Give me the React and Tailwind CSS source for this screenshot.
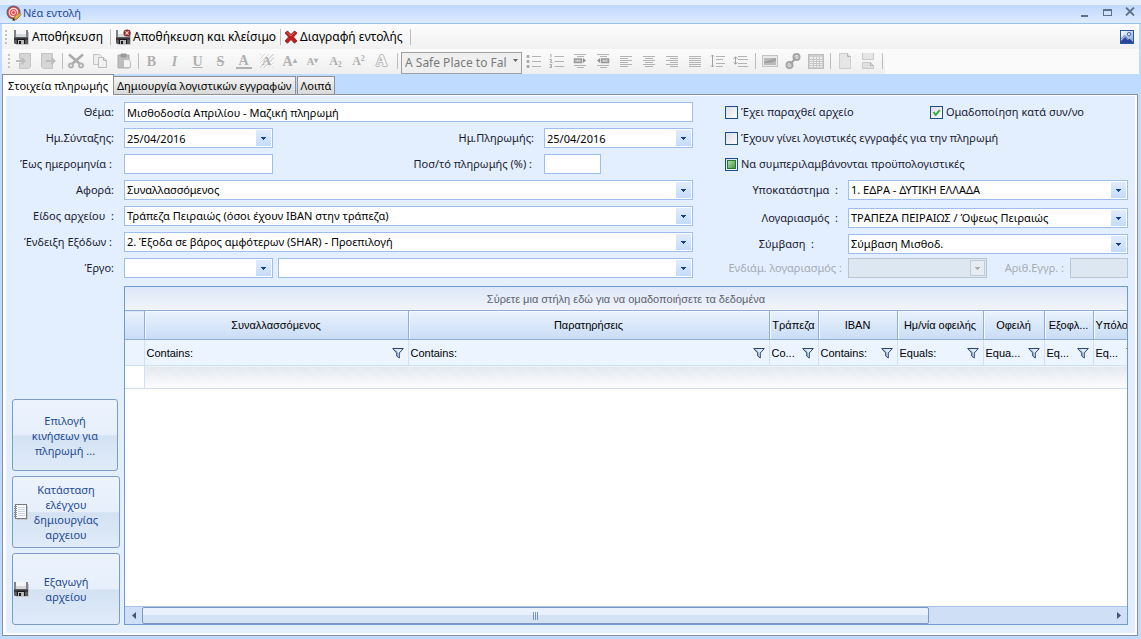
import React from 'react';
import clsx from 'clsx';

const FloppyIcon = ({ closing }) => (
  <svg width="15" height="16" viewBox="0 0 15 16" aria-hidden="true">
    <path d="M0 1h14v14H1l-1-1z" fill="#5b5b5e" />
    <path d="M0 1h2v7H0zM12 1h2v7h-2z" fill="#808285" />
    <path d="M2 1h10v7H2z" fill="#f4f6f6" />
    <path d="M2 5h10v3H2z" fill="#d3d9d9" />
    <path d="M0 9h14v2H0z" fill="#3a3a3d" />
    <path d="M3 10h8v5H3z" fill="#18181a" />
    <path d="M4 11h6v4H4z" fill="#b9bcbe" />
    <path d="M5 12h2v3H5z" fill="#18181a" />
    <path d="M14.500 3v12.500H2" fill="none" stroke="#c8c8c8" />
    {closing && (
      <>
        <circle cx="11" cy="4" r="3.6" fill="#8d2a2a" />
        <path d="M9.4 2.4l3.2 3.2M12.6 2.4L9.4 5.6" stroke="#f3c9c9" strokeWidth="1.3" />
      </>
    )}
  </svg>
);

const DeleteIcon = () => (
  <svg width="14" height="14" viewBox="0 0 14 14" aria-hidden="true">
    <path d="M1 3l2.500-2L7 4.500 10.500 1 13 3 9.500 7 13 11l-2.500 2.200L7 9.500 3.500 13.200 1 11l3.500-4z" fill="#c8191c" stroke="#6b2a2a" strokeWidth="0.8" />
    <path d="M3 2.500l4 3.500 3.500-3.500" fill="none" stroke="#e86a62" strokeWidth="0.9" />
  </svg>
);

const TargetIcon = () => (
  <svg width="16" height="16" viewBox="0 0 16 16" aria-hidden="true">
    <circle cx="7.500" cy="7.500" r="7" fill="#6d6265" />
    <circle cx="7.500" cy="7.500" r="5.800" fill="#e8474a" />
    <circle cx="7.500" cy="7.500" r="4.200" fill="none" stroke="#fbe9e6" strokeWidth="1.200" />
    <circle cx="7.500" cy="7.500" r="2" fill="none" stroke="#fbe9e6" strokeWidth="1" />
    <path d="M8 14l1-3 4.500-3 1.500 1.500L11 14l-3 1.500z" fill="#e2b33c" stroke="#7d5a24" strokeWidth="0.700" />
    <path d="M7 13l2 2-2.500.8z" fill="#222" />
  </svg>
);

const PictureIcon = () => (
  <svg width="14" height="14" viewBox="0 0 14 14" aria-hidden="true">
    <defs>
      <linearGradient id="sky" x1="0" y1="0" x2="1" y2="1">
        <stop offset="0" stopColor="#ffffff" />
        <stop offset="1" stopColor="#7e9fd6" />
      </linearGradient>
    </defs>
    <rect x="0.500" y="0.500" width="13" height="13" fill="url(#sky)" stroke="#2b58a5" />
    <path d="M1 11l4-4 3 3 1.500-1.500L13 12v1H1z" fill="#27479a" />
    <path d="M1 9l4-3.500L9 10" fill="none" stroke="#5877b8" />
    <circle cx="9" cy="4.200" r="1.700" fill="#dfe9fa" stroke="#3d62ab" />
  </svg>
);

const NotebookIcon = () => (
  <svg width="14" height="16" viewBox="0 0 14 16" aria-hidden="true">
    <rect x="1.500" y="0.500" width="11" height="14" fill="#fcfdff" stroke="#77797d" />
    <path d="M4 3.500h7M4 5.500h7M4 7.500h7M4 9.500h7M4 11.500h7" stroke="#ccd6ea" />
    <path d="M0 2.500h3M0 4.500h3M0 6.500h3M0 8.500h3M0 10.500h3M0 12.500h3" stroke="#8e9094" />
    <path d="M13.500 2v13.500H3" fill="none" stroke="#c3c9d3" />
  </svg>
);

const FunnelIcon = () => (
  <svg width="12" height="12" viewBox="0 0 12 12" aria-hidden="true">
    <path d="M0.700 1.500h10.600L7.300 6v5L4.700 9V6z" fill="#dfeaf8" stroke="#2a4478" />
    <path d="M3 2.500L5.700 6v3" fill="none" stroke="#8ba6cf" />
  </svg>
);

const G = ({ children }) => (
  <svg width="16" height="16" viewBox="0 0 16 16" fill="none" stroke="#b3b3b3" aria-hidden="true">
    {children}
  </svg>
);

const icons = {
  indentIn: (
    <G>
      <path d="M3.500 6V0.500h11V14l-2 1.500h-9V10" fill="#d6d6d6" stroke="#c4c4c4" />
      <path d="M0 8h8M5.500 5L8.500 8l-3 3" stroke="#bcbcbc" strokeWidth="2" />
    </G>
  ),
  indentOut: (
    <G>
      <path d="M12.500 6V0.500h-11V14l2 1.500h9V10" fill="#d6d6d6" stroke="#c4c4c4" />
      <path d="M6 8h8M11.500 5l3 3-3 3" stroke="#bcbcbc" strokeWidth="2" />
    </G>
  ),
  cut: (
    <G>
      <path d="M1 1.500l11 9.500M15 1.500L4 11" stroke="#ababab" strokeWidth="2.500" />
      <circle cx="3" cy="12.500" r="2" strokeWidth="2" />
      <circle cx="13" cy="12.500" r="2" strokeWidth="2" />
    </G>
  ),
  copy: (
    <G>
      <path d="M1.500 1.500h6l2 2v8h-8z" fill="#eee" stroke="#c2c2c2" />
      <path d="M6.500 4.500h5l3 3v7h-8z" fill="#f1f1f1" stroke="#bcbcbc" />
      <path d="M11.500 4.500v3h3" />
    </G>
  ),
  paste: (
    <G>
      <path d="M2 2h11v13H2z" fill="#bdbdbd" stroke="#aaa" />
      <path d="M5 1h5v3H5z" fill="#999" stroke="#999" />
      <path d="M7.500 6.500h5l2 2v6h-7z" fill="#f3f3f3" stroke="#bbb" />
    </G>
  ),
  bullets: (
    <G>
      <path d="M6 3.500h9M6 8.500h9M6 13.500h9" />
      <path d="M1 2.500h2v2H1zM1 7.500h2v2H1zM1 12.500h2v2H1z" fill="#aaa" stroke="#aaa" />
    </G>
  ),
  numbers: (
    <G>
      <path d="M5.500 3.500H15M5.500 8.500H15M5.500 13.500H15" />
      <path d="M1 1.500h1v3M0.500 6.500h2v1.500h-1v1.500h2M0.500 11.500h2v3h-2M1 13h1" stroke="#aaa" />
    </G>
  ),
  right: (
    <G>
      <path d="M2 1.500h12M5 3.500h7M2 12.500h12M5 14.500h7" />
      <path d="M2.500 6h7v3.500h-7z" fill="#ccc" stroke="#999" strokeWidth="1.500" />
      <path d="M11 5l3 2.500-3 2.500z" fill="#8f8f8f" stroke="none" />
    </G>
  ),
  left: (
    <G>
      <path d="M2 1.500h12M5 3.500h7M2 12.500h12M5 14.500h7" />
      <path d="M6.500 6h7v3.500h-7z" fill="#ccc" stroke="#999" strokeWidth="1.500" />
      <path d="M5 5L2 7.500 5 10z" fill="#8f8f8f" stroke="none" />
    </G>
  ),
  alignLeft: <G><path d="M2 3.500h12M2 5.500h8M2 7.500h12M2 9.500h8M2 11.500h12M2 13.500h8" /></G>,
  alignCenter: <G><path d="M2 3.500h12M4 5.500h8M2 7.500h12M4 9.500h8M2 11.500h12M4 13.500h8" /></G>,
  alignRight: <G><path d="M2 3.500h12M6 5.500h8M2 7.500h12M6 9.500h8M2 11.500h12M6 13.500h8" /></G>,
  justify: <G><path d="M2 3.500h12M2 5.500h12M2 7.500h12M2 9.500h12M2 11.500h12M2 13.500h12" /></G>,
  lineSpacing: (
    <G>
      <path d="M6 3.500h9M6 6.500h7M6 10.500h9M6 13.500h7" />
      <path d="M2.500 2v12M1 3.500L2.500 2 4 3.500M1 12.500L2.500 14 4 12.500" stroke="#a0a0a0" />
    </G>
  ),
  paraSpacing: (
    <G>
      <path d="M5 3.500h9M5 6.500h10M5 10.500h9M5 13.500h10" />
      <path d="M2.500 4v7M0.500 5.500L2.500 4l2 1.500M0.500 9.500l2 1.500 2-1.500" stroke="#a0a0a0" />
    </G>
  ),
  image: (
    <G>
      <rect x="0.500" y="2.500" width="15" height="11" fill="#e9e9e9" stroke="#c4c4c4" />
      <path d="M2 5h12v7H2z" fill="#bbb" stroke="none" />
      <path d="M2 9l5-2 7-2v3l-6 2H2z" fill="#a2a2a2" stroke="none" />
    </G>
  ),
  link: (
    <G>
      <circle cx="11.500" cy="4" r="3" stroke="#a5a5a5" strokeWidth="2" />
      <circle cx="4.500" cy="12" r="3" stroke="#a5a5a5" strokeWidth="2" />
      <path d="M10.500 5L5.500 11" stroke="#a5a5a5" strokeWidth="2" />
      <circle cx="11.500" cy="4" r="1" />
      <circle cx="4.500" cy="12" r="1" />
    </G>
  ),
  table: (
    <G>
      <rect x="0.500" y="1.500" width="15" height="14" fill="#cfcfcf" stroke="#bcbcbc" />
      <path d="M2 4h12v10H2z" fill="#efefef" stroke="none" />
      <path d="M2 6.500h12M2 8.500h12M2 10.500h12M2 12.500h12M5.500 4v10M8.500 4v10M11.500 4v10" stroke="#c6c6c6" />
    </G>
  ),
  page: (
    <G>
      <path d="M2.500 0.500h8l3 3v12h-11z" fill="#e6e6e6" stroke="#cdcdcd" />
      <path d="M10.500 0.500v3h3" stroke="#b4b4b4" />
    </G>
  ),
  pageBreak: (
    <G>
      <path d="M2.500 0v6.500h11V0" fill="#e6e6e6" stroke="#c8c8c8" />
      <path d="M2.500 15.500v-6h8l3 3v3z" fill="#e0e0e0" stroke="#c8c8c8" />
      <path d="M10.500 9.500v3h3" />
    </G>
  ),
};

const Sep = ({ className }) => (
  <span className={clsx('flex h-4 justify-center', className)}>
    <span className="h-full w-px bg-[#bdbdbd]" />
  </span>
);

const Grip = () => (
  <span className="flex flex-col gap-[2px]">
    {[0, 1, 2, 3].map((i) => (
      <span key={i} className="size-[2px] bg-[#c3c3c3]" />
    ))}
  </span>
);

const ToolButton = ({ name, label, wide, children }) => (
  <button
    type="button"
    disabled
    aria-label={label || name}
    className={clsx(
      "flex h-[22px] items-center justify-center font-['Liberation_Serif',serif] text-[14px] font-bold text-[#b0b0b0]",
      wide ? 'w-6' : 'w-[23px]'
    )}
  >
    {name ? icons[name] : children}
  </button>
);

const Arrow = ({ disabled }) => (
  <span
    className={clsx(
      'pointer-events-none absolute top-[2px] right-[2px] bottom-[2px] flex w-[15px] items-center justify-center',
      disabled ? 'border border-[#c3ccd4] bg-[#e6ecf2]' : 'bg-linear-to-b from-[#e1edff] to-[#c3dbfb]'
    )}
  >
    <svg width="5" height="3" viewBox="0 0 5 3" aria-hidden="true">
      <path d="M0 0h5v1H4v1H3v1H2V2H1V1H0z" fill={disabled ? '#a9a9a9' : '#15428b'} />
    </svg>
  </span>
);

const fieldClass =
  'h-5 w-full appearance-none rounded-none border border-[#9ebfea] bg-white px-[2px] text-[11px] leading-[18px] text-black outline-none disabled:border-[#b9c5cf] disabled:bg-[#dde7f1] disabled:opacity-100';

const Combo = ({ id, label, value = '', className, disabled }) => (
  <div className={clsx('relative', className)}>
    <select id={id} aria-label={label} disabled={disabled} defaultValue={value} className={fieldClass}>
      <option value={value}>{value}</option>
    </select>
    <Arrow disabled={disabled} />
  </div>
);

const DateBox = ({ id, value }) => (
  <div className="relative w-[149px]">
    <input id={id} type="text" defaultValue={value} className={fieldClass} />
    <Arrow />
  </div>
);

const Label = ({ htmlFor, className, children }) => (
  <label htmlFor={htmlFor} className={clsx('shrink-0 text-right whitespace-pre', className)}>
    {children}
  </label>
);

const Check = ({ id, label, state }) => (
  <span className="flex h-5 items-center gap-[3px]">
    <span className="relative flex">
      <input
        id={id}
        type="checkbox"
        defaultChecked={Boolean(state)}
        className="size-[13px] appearance-none border border-[#1c4f8c] bg-linear-to-br from-[#dcdfe4] to-[#fbfbfb]"
      />
      {state === 'on' && (
        <svg className="pointer-events-none absolute inset-0" width="13" height="13" viewBox="0 0 13 13" aria-hidden="true">
          <path d="M3.500 6l2.200 3L9.800 4.200" fill="none" stroke="#3cae3c" strokeWidth="2" />
        </svg>
      )}
      {state === 'mixed' && (
        <span className="pointer-events-none absolute inset-[2px] border border-[#2b7a2b] bg-linear-to-br from-[#b5dcb0] to-[#3f963f]" />
      )}
    </span>
    <label htmlFor={id}>{label}</label>
  </span>
);

const columns = [
  { title: 'Συναλλασσόμενος', filter: 'Contains:', width: 'w-[264px]' },
  { title: 'Παρατηρήσεις', filter: 'Contains:', width: 'w-[361px]' },
  { title: 'Τράπεζα', filter: 'Co...', width: 'w-[49px]' },
  { title: 'IBAN', filter: 'Contains:', width: 'w-[79px]' },
  { title: 'Ημ/νία οφειλής', filter: 'Equals:', width: 'w-[86px]' },
  { title: 'Οφειλή', filter: 'Equa...', width: 'w-[61px]' },
  { title: 'Εξοφλ...', filter: 'Eq...', width: 'w-[49px]' },
  { title: 'Υπόλοι...', filter: 'Eq...', width: 'w-[49px]' },
];

const TitleBar = () => (
  <header className="border-t-[5px] border-b border-t-[#e3efff] border-b-[#9ac2f2]">
    <div className="flex h-[18px] items-center bg-linear-to-b from-[#bfd8ff] to-[#dfebff] px-[6px] pb-[3px]">
      <TargetIcon />
      <h1 className="ml-px text-[11px] leading-4 text-[#1e4a94]">Νέα εντολή</h1>
      <div className="ml-auto flex h-3 items-start gap-[13px]">
        <button type="button" aria-label="Minimize" className="flex h-[10px] w-[9px] items-end">
          <span className="h-[2px] w-[7px] bg-[#5f6f8c]" />
        </button>
        <button type="button" aria-label="Maximize" className="mt-[2px] h-[7px] w-[9px] border border-t-2 border-[#5f6f8c]" />
        <button type="button" aria-label="Close">
          <svg width="10" height="9" viewBox="0 0 10 9" aria-hidden="true">
            <path d="M1 0.500l8 8M9 0.500l-8 8" stroke="#5f6f8c" strokeWidth="1.800" />
          </svg>
        </button>
      </div>
    </div>
  </header>
);

const ActionBar = () => (
  <div className="flex h-[25px] items-center bg-linear-to-b from-[#fdfdfd] to-[#f1f1f1] pr-[5px] pl-[3px] text-[12px] text-black">
    <Grip />
    <button type="button" className="ml-[7px] flex items-center gap-[3px]">
      <FloppyIcon />
      Αποθήκευση
    </button>
    <Sep className="ml-[7px] w-px" />
    <button type="button" className="ml-[5px] flex items-center gap-[2px]">
      <FloppyIcon closing />
      Αποθήκευση και κλείσιμο
    </button>
    <Sep className="ml-1 w-px" />
    <button type="button" className="ml-[3px] flex items-center gap-[2px]">
      <DeleteIcon />
      Διαγραφή εντολής
    </button>
    <Sep className="ml-[7px] w-px" />
    <button type="button" aria-label="Εικόνα" className="ml-auto">
      <PictureIcon />
    </button>
  </div>
);

const FormatBar = () => (
  <div className="flex bg-[#fafafa]">
    <div className="flex h-[25px] items-center bg-linear-to-b from-[#fbfbfb] to-[#efefef] pb-px pl-[6px]">
      <Grip />
      <span className="w-[2px]" />
      <ToolButton name="indentIn" wide />
      <ToolButton name="indentOut" wide />
      <Sep className="w-[4px]" />
      <ToolButton name="cut" wide />
      <ToolButton name="copy" wide />
      <ToolButton name="paste" wide />
      <Sep className="w-[4px]" />
      <ToolButton label="Bold">B</ToolButton>
      <ToolButton label="Italic"><i>I</i></ToolButton>
      <ToolButton label="Underline"><u>U</u></ToolButton>
      <ToolButton label="Strike"><s>S</s></ToolButton>
      <ToolButton label="Font color">
        <span className="w-4 border-b-2 leading-[13px]">A</span>
      </ToolButton>
      <ToolButton label="Highlight">
        <span className="w-[14px] bg-[repeating-linear-gradient(135deg,#dadada_0px,#dadada_1px,#f7f7f7_1px,#f7f7f7_3px)] text-[13px] leading-[14px]">A</span>
      </ToolButton>
      <ToolButton label="Grow font">A<span className="text-[8px]">▴</span></ToolButton>
      <ToolButton label="Shrink font"><span className="text-[11px]">A</span><span className="text-[8px]">▾</span></ToolButton>
      <ToolButton label="Subscript">
        <span className="text-[12px]">A<sub className="text-[8px]">2</sub></span>
      </ToolButton>
      <ToolButton label="Superscript">
        <span className="text-[12px]">A<sup className="text-[8px]">2</sup></span>
      </ToolButton>
      <ToolButton label="Outline">
        <span className="text-[16px] text-[#f8f8f8] [text-shadow:1px_0_#b4b4b4,-1px_0_#b4b4b4,0_1px_#b4b4b4,0_-1px_#b4b4b4]">A</span>
      </ToolButton>
      <Sep className="w-[8px]" />
      <div className="relative w-[121px]">
        <select
          aria-label="Γραμματοσειρά"
          disabled
          className="h-[22px] w-full appearance-none border border-[#a0a0a0] bg-[#efefef] pr-[14px] pl-[3px] text-[12px] text-[#7a7a7a] opacity-100"
        >
          <option>A Safe Place to Fal</option>
        </select>
        <svg className="pointer-events-none absolute top-[10px] right-[4px]" width="5" height="3" viewBox="0 0 5 3" aria-hidden="true">
          <path d="M0 0h5L2.500 3z" fill="#666" />
        </svg>
      </div>
      {['bullets', 'numbers', 'right', 'left', 'alignLeft', 'alignCenter', 'alignRight', 'justify', 'lineSpacing', 'paraSpacing'].map((n) => (
        <ToolButton key={n} name={n} />
      ))}
      <Sep className="w-[6px]" />
      <ToolButton name="image" />
      <ToolButton name="link" />
      <ToolButton name="table" />
      <Sep className="w-[6px]" />
      <ToolButton name="page" />
      <ToolButton name="pageBreak" />
      <Sep className="w-[6px]" />
    </div>
  </div>
);

const Tabs = () => {
  const idle =
    'h-[18px] border border-b-0 border-[#8b8e9c] bg-linear-to-b from-[#f4f4f4] to-[#d9d9d9] px-[3px] leading-[17px]';
  return (
    <div role="tablist" className="flex h-5 items-end text-[11px] whitespace-nowrap text-black">
      <button
        type="button"
        role="tab"
        aria-selected="true"
        className="relative z-10 -mb-px h-[21px] border border-b-0 border-[#8b8e9c] bg-white px-[5px] leading-[17px]"
      >
        Στοιχεία πληρωμής
      </button>
      <button type="button" role="tab" className={clsx(idle, 'border-l-0')}>
        Δημιουργία λογιστικών εγγραφών
      </button>
      <button type="button" role="tab" className={clsx(idle, 'ml-px')}>
        Λοιπά
      </button>
    </div>
  );
};

const PaymentForm = () => (
  <div className="flex min-w-0 flex-1 flex-col gap-[6px]">
    <div className="flex items-center gap-[10px]">
      <Label htmlFor="subject" className="w-[108px]">Θέμα:</Label>
      <input id="subject" type="text" defaultValue="Μισθοδοσία Απριλίου - Μαζική πληρωμή" className={fieldClass} />
    </div>
    <div className="flex items-center gap-[10px]">
      <Label htmlFor="issued" className="w-[108px]">Ημ.Σύνταξης:</Label>
      <DateBox id="issued" value="25/04/2016" />
      <Label htmlFor="paid" className="ml-auto">Ημ.Πληρωμής:</Label>
      <DateBox id="paid" value="25/04/2016" />
    </div>
    <div className="flex h-5 items-center gap-[10px]">
      <Label htmlFor="until" className="w-[108px] pr-[2px]">Έως ημερομηνία :</Label>
      <div className="w-[149px]">
        <input id="until" type="text" className={fieldClass} />
      </div>
      <Label htmlFor="percent" className="ml-auto pr-[2px]">Ποσ/τό πληρωμής (%) :</Label>
      <div className="w-[149px]">
        <input id="percent" type="text" className={clsx(fieldClass, 'max-w-[57px]')} />
      </div>
    </div>
    <div className="flex items-center gap-[10px]">
      <Label htmlFor="about" className="w-[108px]">Αφορά:</Label>
      <Combo id="about" value="Συναλλασσόμενος" className="flex-1" />
    </div>
    <div className="flex items-center gap-[10px]">
      <Label htmlFor="kind" className="w-[108px]">Είδος αρχείου  :</Label>
      <Combo id="kind" value="Τράπεζα Πειραιώς (όσοι έχουν IBAN στην τράπεζα)" className="flex-1" />
    </div>
    <div className="flex items-center gap-[10px]">
      <Label htmlFor="costs" className="w-[108px] pr-[2px]">Ένδειξη Εξόδων :</Label>
      <Combo id="costs" value="2. Έξοδα σε βάρος αμφότερων (SHAR) - Προεπιλογή" className="flex-1" />
    </div>
    <div className="flex items-center gap-[10px]">
      <Label htmlFor="project" className="w-[108px]">Έργο:</Label>
      <div className="flex flex-1 gap-[5px]">
        <Combo id="project" className="w-[149px]" />
        <Combo label="Περιγραφή έργου" className="flex-1" />
      </div>
    </div>
  </div>
);

const AccountForm = () => (
  <div className="w-[408px] shrink-0">
    <div className="flex flex-col gap-[6px] pl-[5px]">
      <div className="flex justify-between pr-[44px]">
        <Check id="produced" label="Έχει παραχθεί αρχείο" />
        <Check id="grouped" label="Ομαδοποίηση κατά συν/νο" state="on" />
      </div>
      <Check id="posted" label="Έχουν γίνει λογιστικές εγγραφές για την πληρωμή" />
      <Check id="planned" label="Να συμπεριλαμβάνονται προϋπολογιστικές" state="mixed" />
    </div>
    <div className="mt-[6px] flex items-center gap-[6px]">
      <Label htmlFor="branch" className="w-[122px] pr-1">Υποκατάστημα  :</Label>
      <Combo id="branch" value="1. ΕΔΡΑ - ΔΥΤΙΚΗ ΕΛΛΑΔΑ" className="flex-1" />
    </div>
    <div className="mt-2 flex items-center gap-[6px]">
      <Label htmlFor="account" className="w-[122px] pr-1">Λογαριασμός  :</Label>
      <Combo id="account" value="ΤΡΑΠΕΖΑ ΠΕΙΡΑΙΩΣ / Όψεως Πειραιώς" className="flex-1" />
    </div>
    <div className="mt-[6px] flex items-center gap-[6px]">
      <Label htmlFor="contract" className="w-[122px] pr-7">Σύμβαση  :</Label>
      <Combo id="contract" value="Σύμβαση Μισθοδ." className="flex-1" />
    </div>
    <div className="mt-1 flex items-center gap-[6px] text-[#a5abb3]">
      <Label htmlFor="middle" className="w-[122px]">Ενδιάμ. λογαριασμός :</Label>
      <Combo id="middle" className="w-[139px]" disabled />
      <Label htmlFor="docs" className="ml-auto">Αριθ.Εγγρ. :</Label>
      <div className="w-[58px]">
        <input id="docs" type="text" disabled className={fieldClass} />
      </div>
    </div>
  </div>
);

const SideButton = ({ icon, lines, className }) => (
  <button
    type="button"
    className={clsx(
      'relative h-[72px] rounded-[3px] border border-[#7f9cc6] bg-[linear-gradient(#ecf3fd_0%,#e6effb_50%,#d3e2f3_51%,#e0ebfa_100%)] text-[11px] leading-[15px] text-[#1e4a94]',
      className
    )}
  >
    {icon && <span className="absolute top-[27px] left-px">{icon}</span>}
    {lines.map((line) => (
      <span key={line} className="block">{line}</span>
    ))}
  </button>
);

const Grid = () => (
  <div className="flex min-w-0 flex-1 flex-col overflow-hidden border border-[#6f9ad3] bg-white font-['Liberation_Sans',sans-serif] text-[11px]">
    <p className="h-[23px] bg-linear-to-b from-[#dde8f7] to-[#f1f4fb] text-center leading-[25px] text-[#5c6370]">
      Σύρετε μια στήλη εδώ για να ομαδοποιήσετε τα δεδομένα
    </p>
    <div className="flex-1 overflow-hidden">
      <table className="w-[1017px] table-fixed border-collapse text-black">
        <thead>
          <tr className="h-[29px]">
            <th aria-label="Γραμμή" className="w-[19px] border border-l-0 border-[#8fadd6] bg-linear-to-b from-[#e9f2fc] to-[#c9dcf6]" />
            {columns.map((c) => (
              <th
                key={c.title}
                className={clsx(
                  'overflow-hidden border border-[#8fadd6] bg-linear-to-b from-[#e9f2fc] to-[#c9dcf6] p-0 font-normal whitespace-nowrap shadow-[inset_1px_1px_0_#f5f9ff]',
                  c.width
                )}
              >
                {c.title}
              </th>
            ))}
          </tr>
        </thead>
        <tbody>
          <tr className="h-[26px] bg-[#ebf4ff]">
            <td className="border border-l-0 border-[#cfdff4]" />
            {columns.map((c) => (
              <td key={c.title} className="overflow-hidden border border-[#cfdff4] p-0">
                <div className="flex items-center justify-between pr-1 pl-[2px]">
                  <span>{c.filter}</span>
                  <button type="button" aria-label={`Φίλτρο ${c.title}`}>
                    <FunnelIcon />
                  </button>
                </div>
              </td>
            ))}
          </tr>
          <tr className="h-[23px]">
            <td className="border border-l-0 border-[#cfdff4]" />
            <td
              colSpan={8}
              className="border border-[#cfdff4] bg-[repeating-linear-gradient(45deg,#ffffff33_0px,#ffffff33_1px,transparent_1px,transparent_2px),linear-gradient(#dfe5ed,#fdfdfd)]"
            />
          </tr>
        </tbody>
      </table>
    </div>
    <div className="flex h-[18px] items-center border-t border-[#a9c4e8] bg-[#cfdff5]">
      <button type="button" aria-label="Κύλιση αριστερά" className="flex w-[17px] justify-center">
        <svg width="4" height="7" viewBox="0 0 4 7" aria-hidden="true"><path d="M4 0v7L0 3.500z" fill="#3f5375" /></svg>
      </button>
      <div className="flex h-full flex-1">
        <div className="flex h-[17px] w-13/16 items-center justify-center gap-px rounded-[2px] border border-[#7c97c0] bg-[linear-gradient(#e9f1fc_50%,#d4e3f4_50%)]">
          {[0, 1, 2].map((i) => (
            <span key={i} className="h-2 w-px bg-[#7c97c0]" />
          ))}
        </div>
      </div>
      <button type="button" aria-label="Κύλιση δεξιά" className="flex w-[17px] justify-center">
        <svg width="4" height="7" viewBox="0 0 4 7" aria-hidden="true"><path d="M0 0v7l4-3.500z" fill="#3f5375" /></svg>
      </button>
    </div>
  </div>
);

const App = () => {
  return (
    <div className="flex min-h-screen flex-col bg-[#bfdbff] px-[2px] pb-[3px] font-['Noto_Sans',sans-serif]">
      <div className="-mx-[2px]">
        <TitleBar />
        <div className="px-[2px]">
          <ActionBar />
          <FormatBar />
        </div>
      </div>
      <Tabs />
      <main className="mr-px flex flex-1 flex-col border border-[#8b8e9c] bg-white pt-px pr-[2px] pb-[2px] pl-[3px]">
        <div className="flex flex-1 flex-col gap-2 bg-[#e3efff] pt-[6px] pr-[7px] pb-2 text-[11px] leading-4 text-[#1a1a2e]">
          <div className="flex gap-[27px]">
            <PaymentForm />
            <AccountForm />
          </div>
          <div className="flex flex-1">
            <div className="flex w-[118px] flex-col justify-end gap-[5px] pl-[6px]">
              <SideButton lines={['Επιλογή', 'κινήσεων για', 'πληρωμή ...']} className="w-[106px]" />
              <SideButton icon={<NotebookIcon />} lines={['Κατάσταση', 'ελέγχου', 'δημιουργίας', 'αρχειου']} className="w-[108px]" />
              <SideButton icon={<FloppyIcon />} lines={['Εξαγωγή', 'αρχείου']} className="w-[108px]" />
            </div>
            <Grid />
          </div>
        </div>
      </main>
    </div>
  );
};

export default App;
